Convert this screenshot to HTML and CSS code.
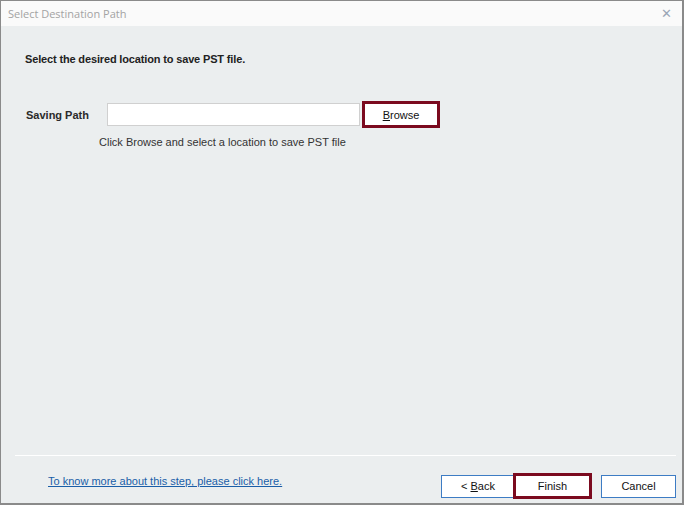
FILE: index.html
```html
<!DOCTYPE html>
<html lang="en">
<head>
    <meta charset="UTF-8">
    <title>Select Destination Path</title>
    <link rel="stylesheet" href="styles.css">
</head>
<body>
    <div class="window">
        <div class="titlebar">
            <span class="title">Select Destination Path</span>
            <span class="close">&#x2715;</span>
        </div>
        <div class="content">
            <h1>Select the desired location to save PST file.</h1>
            <div class="path-row">
                <label for="path">Saving Path</label>
                <input id="path" type="text">
                <button class="btn focus browse"><u>B</u>rowse</button>
            </div>
            <p class="hint">Click Browse and select a location to save PST file</p>
            <div class="spacer"></div>
            <div class="separator"></div>
            <div class="footer">
                <a href="#" class="help">To know more about this step, please click here.</a>
                <div class="actions">
                    <button class="btn nav">&lt; <u>B</u>ack</button>
                    <button class="btn focus finish">Finish</button>
                    <button class="btn nav cancel">Cancel</button>
                </div>
            </div>
        </div>
    </div>
</body>
</html>
```

FILE: styles.css
```css
html, body {
    margin: 0;
    height: 100%;
}
body {
    font-family: "Liberation Sans", Arial, sans-serif;
    font-size: 11px;
    color: #1a1a1a;
}
.window {
    box-sizing: border-box;
    height: 505px;
    border: 1px solid #8a8a8a;
    border-width: 1px 2px 2px 1px;
    display: flex;
    flex-direction: column;
    background: #ebeeef;
}
.titlebar {
    height: 25px;
    background: #fafafa;
    display: flex;
    align-items: center;
    justify-content: space-between;
    padding: 0 10px 0 7px;
}
.title {
    font-family: "Open Sans", "Noto Sans", sans-serif;
    font-size: 11px;
    color: #a3a3a3;
}
.close {
    font-size: 13px;
    color: #9aa6b6;
}
.content {
    flex: 1;
    display: flex;
    flex-direction: column;
    padding: 0 6px 4px 13px;
}
h1 {
    font-size: 11px;
    font-weight: bold;
    letter-spacing: -0.15px;
    margin: 27px 0 0 11px;
    color: #222;
}
.path-row {
    display: flex;
    align-items: center;
    margin-top: 36px;
}
label {
    font-weight: bold;
    font-size: 11px;
    width: 81px;
    margin-left: 12px;
    color: #2a2a2a;
}
input {
    box-sizing: border-box;
    width: 253px;
    height: 23px;
    border: 1px solid #d0d0d0;
    background: #fff;
    margin: 0 2px 0 0;
    padding: 0 4px;
}
.btn {
    box-sizing: border-box;
    background: #fff;
    font-family: "Liberation Sans", Arial, sans-serif;
    font-size: 11px;
    color: #111;
    padding: 0;
}
.focus {
    border: 3px solid #7b0a1f;
}
.browse {
    width: 78px;
    height: 27px;
}
.hint {
    margin: 8px 0 0 85px;
    color: #333;
}
.spacer {
    flex: 1;
}
.separator {
    height: 1px;
    background: #fff;
    margin: 0 0 0 1px;
}
.footer {
    display: flex;
    justify-content: space-between;
    align-items: flex-start;
    margin-top: 17px;
}
.help {
    color: #1a5ea8;
    margin-left: 34px;
    margin-top: 2px;
}
.actions {
    display: flex;
    align-items: center;
}
.nav {
    width: 74px;
    height: 23px;
    border: 1px solid #3d7cc4;
}
.finish {
    width: 79px;
    height: 26px;
    margin-left: -2px;
}
.cancel {
    width: 75px;
    margin-left: 9px;
}
```
